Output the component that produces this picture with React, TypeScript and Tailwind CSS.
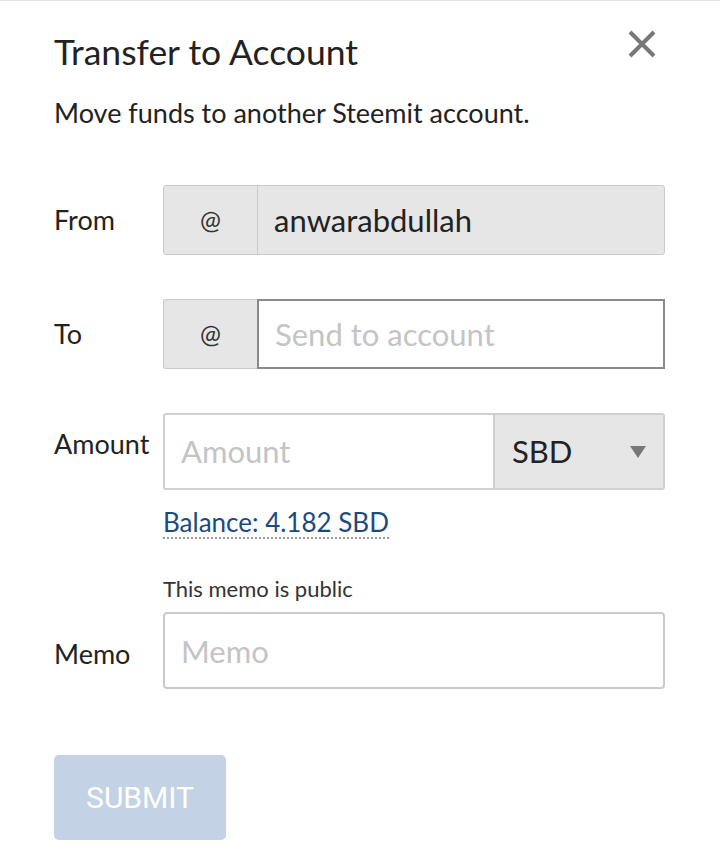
import { useState } from "react";

const font = { fontFamily: "Lato, 'Noto Sans', sans-serif" };

function Label({ children }: { children: React.ReactNode }) {
  return <div className="w-[109px] shrink-0 text-[27px] text-[#222]">{children}</div>;
}

export default function App() {
  const [to, setTo] = useState("");
  const [amount, setAmount] = useState("");
  const [memo, setMemo] = useState("");

  return (
    <div className="min-h-[856px] w-[720px] bg-white border-t border-[#e5e5e5]" style={font}>
      <div className="pl-[54px] pr-[55px] pt-[27px]">
        <div className="flex items-start justify-between">
          <h1 className="text-[35.5px] leading-[48px] text-[#222]">Transfer to Account</h1>
          <button className="mt-[-2px] mr-[5px] p-1 text-[#777]">
            <svg width="28" height="28" viewBox="0 0 28 28">
              <path d="M2 2 L26 26 M26 2 L2 26" stroke="currentColor" strokeWidth="4" />
            </svg>
          </button>
        </div>
        <p className="mt-[20px] text-[27px] leading-[34px] text-[#222]">Move funds to another Steemit account.</p>

        <div className="mt-[55px] flex items-center">
          <Label>From</Label>
          <div className="flex h-[70px] min-w-0 flex-1 overflow-hidden rounded-[3px] border border-[#cacaca] bg-[#e6e6e6]">
            <div className="flex w-[94px] items-center justify-center border-r border-[#cacaca] text-[25px] text-[#333]">@</div>
            <div className="flex items-center px-[16px] text-[31px] text-[#222]">anwarabdullah</div>
          </div>
        </div>

        <div className="mt-[44px] flex items-center">
          <Label>To</Label>
          <div className="flex h-[70px] min-w-0 flex-1 rounded-[3px]">
            <div className="flex w-[94px] shrink-0 items-center justify-center rounded-l-[3px] border border-r-0 border-[#cacaca] bg-[#e6e6e6] text-[25px] text-[#333]">@</div>
            <input
              autoFocus
              value={to}
              onChange={(e) => setTo(e.target.value)}
              placeholder="Send to account"
              className="w-0 min-w-0 flex-1 border-2 border-[#8a8a8a] bg-white px-[16px] text-[31px] text-[#222] outline-none placeholder:text-[#c4c4c4] caret-[#222]"
            />
          </div>
        </div>

        <div className="mt-[44px] flex items-center">
          <div className="-mt-[14px]">
            <Label>Amount</Label>
          </div>
          <div className="flex h-[77px] min-w-0 flex-1 overflow-hidden rounded-[3px] border-2 border-[#d0d0d0]">
            <input
              value={amount}
              onChange={(e) => setAmount(e.target.value)}
              placeholder="Amount"
              className="w-0 min-w-0 flex-1 bg-white px-[16px] text-[31px] text-[#222] outline-none placeholder:text-[#c4c4c4]"
            />
            <div className="flex w-[170px] items-center justify-between border-l-2 border-[#d0d0d0] bg-[#e6e6e6] pl-[17px] pr-[17px] text-[31px] text-[#222]">
              <span>SBD</span>
              <svg width="16" height="12" viewBox="0 0 16 12">
                <path d="M0 0 H16 L8 12 Z" fill="#777" />
              </svg>
            </div>
          </div>
        </div>

        <div className="ml-[109px] mt-[17px] leading-[30px]">
          <span className="inline-block border-b-2 border-dotted border-[#999] text-[26px] leading-[30px] text-[#1a4b7c]">Balance: 4.182 SBD</span>
        </div>

        <div className="ml-[109px] mt-[35px] text-[22px] leading-[26px] text-[#333]">This memo is public</div>
        <div className="mt-[10px] flex items-center">
          <div className="mt-[8px]">
            <Label>Memo</Label>
          </div>
          <input
            value={memo}
            onChange={(e) => setMemo(e.target.value)}
            placeholder="Memo"
            className="h-[77px] w-0 min-w-0 flex-1 rounded-[4px] border-2 border-[#cacaca] bg-white px-[16px] text-[31px] text-[#222] outline-none placeholder:text-[#c4c4c4]"
          />
        </div>

        <button
          disabled
          className="mt-[66px] h-[85px] w-[172px] rounded-[5px] bg-[#c3d3e5] text-[30px] text-white"
          style={{ fontFamily: "Roboto, 'Liberation Sans', sans-serif" }}
        >
          SUBMIT
        </button>
      </div>
    </div>
  );
}
